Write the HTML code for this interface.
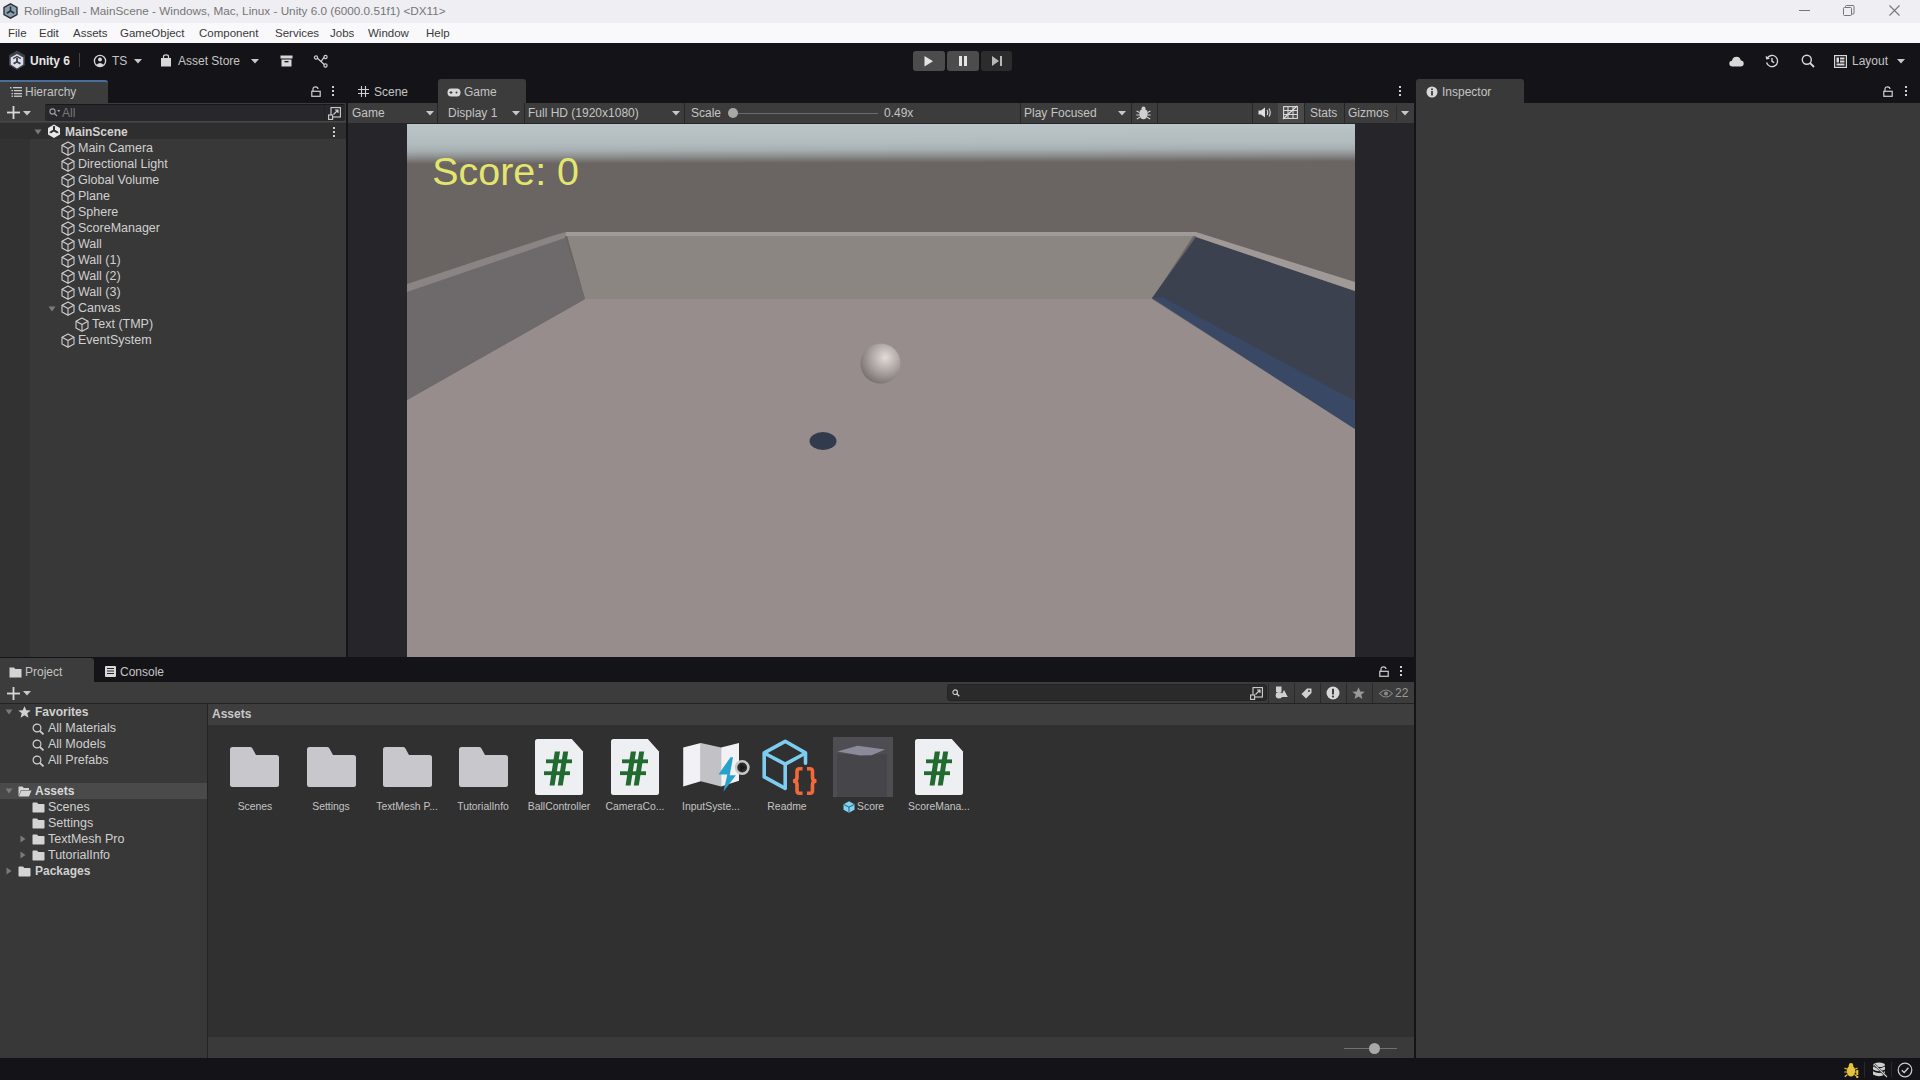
<!DOCTYPE html>
<html><head><meta charset="utf-8">
<style>
*{box-sizing:border-box;margin:0;padding:0}
html,body{width:1920px;height:1080px;overflow:hidden;background:#141418;font-family:"Liberation Sans",sans-serif;font-size:12px;color:#c4c4c4}
.a{position:absolute}
.t{position:absolute;white-space:nowrap;line-height:14px}
svg{position:absolute;overflow:visible}
.a,.t,svg{z-index:1}
.bg{z-index:0 !important}
</style></head><body>
<svg width="0" height="0" style="position:absolute">
<defs>
<symbol id="cube" viewBox="0 0 14 15"><g fill="none" stroke="#d0d0d0" stroke-width="1.1" stroke-linejoin="round"><path d="M7 1 L13 4.3 L13 11 L7 14.3 L1 11 L1 4.3 Z"/><path d="M1 4.3 L7 7.6 L13 4.3 M7 7.6 L7 14.3"/></g></symbol>
<symbol id="unity" viewBox="0 0 14 14"><path d="M7 0.5 L13 4 L13 10.5 L7 14 L1 10.5 L1 4 Z" fill="#e8e8e8"/><path d="M7 2.5 L7 6.3 L3.6 8.4 M7 6.3 L10.4 8.4" stroke="#2e2e2e" stroke-width="2" fill="none"/><path d="M5.5 2.8 L7 1.8 L8.5 2.8Z M2.6 9.4 L2.8 7.5 L4.3 8.6Z M11.4 9.4 L11.2 7.5 L9.7 8.6Z" fill="#2e2e2e"/></symbol>
</defs></svg>

<!-- Title bar -->
<div class="a bg" style="left:0;top:0;width:1920px;height:23px;background:#eeeef3"></div>
<div class="a bg" style="left:0;top:23px;width:1920px;height:20px;background:#f9f9fb"></div>
<div class="t" style="left:24px;top:4px;font-size:11.75px;color:#767676">RollingBall - MainScene - Windows, Mac, Linux - Unity 6.0 (6000.0.51f1) &lt;DX11&gt;</div>
<svg width="15" height="16" style="left:3px;top:3px" viewBox="0 0 15 16"><path d="M7.5 0.8 L14 4.4 L14 11.6 L7.5 15.2 L1 11.6 L1 4.4Z" fill="#8aa0b0" stroke="#2a3038" stroke-width="1.4"/><path d="M7.5 3.5 L7.5 8 L3.8 10.2 M7.5 8 L11.2 10.2" stroke="#2a3038" stroke-width="1.6" fill="none"/></svg>
<div class="a" style="left:1799px;top:10px;width:11px;height:1px;background:#777"></div>
<svg width="12" height="12" style="left:1843px;top:5px" viewBox="0 0 12 12"><rect x="0.5" y="2.5" width="8" height="8" rx="1" fill="none" stroke="#777" stroke-width="1"/><path d="M2.5 2.5 V1.5 Q2.5 0.5 3.5 0.5 H10 Q11 0.5 11 1.5 V8 Q11 9 10 9 H8.5" fill="none" stroke="#777" stroke-width="1"/></svg>
<svg width="12" height="12" style="left:1889px;top:5px" viewBox="0 0 12 12"><path d="M0.5 0.5 L10.5 10.5 M10.5 0.5 L0.5 10.5" stroke="#777" stroke-width="1.1"/></svg>
<div class="t" style="left:8px;top:26px;color:#3a3a3a;font-size:11.5px">File</div>
<div class="t" style="left:39px;top:26px;color:#3a3a3a;font-size:11.5px">Edit</div>
<div class="t" style="left:73px;top:26px;color:#3a3a3a;font-size:11.5px">Assets</div>
<div class="t" style="left:120px;top:26px;color:#3a3a3a;font-size:11.5px">GameObject</div>
<div class="t" style="left:199px;top:26px;color:#3a3a3a;font-size:11.5px">Component</div>
<div class="t" style="left:275px;top:26px;color:#3a3a3a;font-size:11.5px">Services</div>
<div class="t" style="left:330px;top:26px;color:#3a3a3a;font-size:11.5px">Jobs</div>
<div class="t" style="left:368px;top:26px;color:#3a3a3a;font-size:11.5px">Window</div>
<div class="t" style="left:426px;top:26px;color:#3a3a3a;font-size:11.5px">Help</div>

<!-- Main toolbar -->
<div class="a bg" style="left:0;top:43px;width:1920px;height:37px;background:#141418"></div>
<div class="t" style="left:30px;top:54px;font-weight:bold;color:#e6e6e6">Unity 6</div>
<div class="a" style="left:79px;top:53px;width:1px;height:14px;background:#444"></div>
<div class="t" style="left:112px;top:54px;color:#c4c4c4">TS</div>
<div class="t" style="left:178px;top:54px;color:#c4c4c4">Asset Store</div>
<div class="t" style="left:1852px;top:54px;color:#c4c4c4">Layout</div>
<svg width="18" height="21" style="left:8px;top:49.5px" viewBox="0 0 18 21"><path d="M9 0.5 L17 5.2 L17 15.3 L9 20 L1 15.3 L1 5.2Z" fill="#3c424e"/><path d="M9 4 L15.3 7.6 L15.3 14.6 L9 18.4 L2.7 14.6 L2.7 7.6Z" fill="#dcdee8"/><path d="M9 7.8 L9 11.8 L5.6 13.8 M9 11.8 L12.4 13.8" stroke="#3a3e4a" stroke-width="1.8" fill="none"/><path d="M5.2 8.6 L9 6.5 L12.8 8.6" stroke="#3a3e4a" stroke-width="1.2" fill="none"/></svg>
<svg width="14" height="14" style="left:93px;top:54px" viewBox="0 0 14 14"><circle cx="7" cy="7" r="5.6" fill="none" stroke="#d8d8d8" stroke-width="1.3"/><circle cx="7" cy="5.6" r="2" fill="#d8d8d8"/><path d="M3.6 10.6 Q7 7.6 10.4 10.6 L9 12 L5 12Z" fill="#d8d8d8"/></svg>
<svg width="8" height="5" style="left:134px;top:59px"><path d="M0 0 L8 0 L4 4.5Z" fill="#c8c8c8"/></svg>
<svg width="12" height="13" style="left:160px;top:54px" viewBox="0 0 12 13"><path d="M3.5 4 L3.5 2.5 Q3.5 0.8 6 0.8 Q8.5 0.8 8.5 2.5 L8.5 4" fill="none" stroke="#d8d8d8" stroke-width="1.2"/><rect x="1" y="4" width="10" height="8.5" fill="#d8d8d8"/></svg>
<svg width="8" height="5" style="left:251px;top:59px"><path d="M0 0 L8 0 L4 4.5Z" fill="#c8c8c8"/></svg>
<svg width="13" height="12" style="left:280px;top:55px" viewBox="0 0 13 12"><rect x="0.5" y="0.5" width="12" height="3" fill="#d8d8d8"/><rect x="1.5" y="4.5" width="10" height="7" fill="#d8d8d8"/><rect x="4.5" y="6" width="4" height="1.3" fill="#151515"/></svg>
<svg width="14" height="13" style="left:314px;top:55px" viewBox="0 0 14 13"><g fill="none" stroke="#d0d0d0" stroke-width="1.2"><circle cx="2" cy="2.5" r="1.6"/><circle cx="11.5" cy="2" r="1.6"/><circle cx="11.5" cy="10.5" r="1.6"/><path d="M3.5 3.3 L7 6.5 L10 2.3 M7 6.5 L10.2 9.5"/></g></svg>
<svg width="10" height="11" style="left:924px;top:56px"><path d="M0.5 0 L9 5.2 L0.5 10.4Z" fill="#e4e4e4"/></svg>
<div class="a" style="left:959px;top:56px;width:3px;height:10px;background:#e4e4e4"></div>
<div class="a" style="left:964px;top:56px;width:3px;height:10px;background:#e4e4e4"></div>
<svg width="11" height="11" style="left:992px;top:56px"><path d="M0 0 L7 5 L0 10Z" fill="#b8b8b8"/><rect x="8" y="0" width="2" height="10" fill="#b8b8b8"/></svg>
<svg width="15" height="11" style="left:1729px;top:56px" viewBox="0 0 15 11"><path d="M3.5 10.5 Q0.3 10.5 0.3 7.6 Q0.3 5 3 4.8 Q3.6 0.8 7.6 0.8 Q11.2 0.8 11.8 4.6 Q14.7 4.8 14.7 7.6 Q14.7 10.5 11.5 10.5Z" fill="#d8d8d8"/></svg>
<svg width="14" height="14" style="left:1765px;top:54px" viewBox="0 0 14 14"><path d="M2.2 4.2 A5.6 5.6 0 1 1 1.6 8.5" fill="none" stroke="#d8d8d8" stroke-width="1.3"/><path d="M0.6 1.8 L1.2 5.6 L5 4.8Z" fill="#d8d8d8"/><path d="M7 4 L7 7.3 L9.2 8.6" fill="none" stroke="#d8d8d8" stroke-width="1.4"/></svg>
<svg width="14" height="14" style="left:1801px;top:54px" viewBox="0 0 14 14"><circle cx="5.8" cy="5.8" r="4.5" fill="none" stroke="#d8d8d8" stroke-width="1.4"/><path d="M9 9 L13 13" stroke="#d8d8d8" stroke-width="1.8"/></svg>
<svg width="13" height="13" style="left:1834px;top:55px" viewBox="0 0 13 13"><rect x="0.6" y="0.6" width="11.8" height="11.8" fill="none" stroke="#d8d8d8" stroke-width="1.2"/><rect x="2.5" y="2.5" width="2.5" height="5" fill="#d8d8d8"/><rect x="6" y="2.5" width="4.5" height="2" fill="#d8d8d8"/><rect x="6" y="5.5" width="4.5" height="2" fill="#d8d8d8"/><rect x="2.5" y="8.5" width="8" height="2" fill="#d8d8d8"/></svg>
<svg width="8" height="5" style="left:1897px;top:59px"><path d="M0 0 L8 0 L4 4.5Z" fill="#c8c8c8"/></svg>


<!-- play buttons -->
<div class="a bg" style="left:913px;top:51px;width:32px;height:20px;background:#4c4c4c;border-radius:3px"></div>
<div class="a bg" style="left:947px;top:51px;width:32px;height:20px;background:#4c4c4c;border-radius:3px"></div>
<div class="a bg" style="left:981px;top:51px;width:31px;height:20px;background:#2c2c2c;border-radius:3px"></div>

<!-- Hierarchy panel -->
<div class="a bg" style="left:0;top:80px;width:108px;height:23px;background:#3c3c3c;border-top:2px solid #4a6e9a;border-top-right-radius:3px"></div>
<div class="t" style="left:25px;top:85px">Hierarchy</div>
<div class="a bg" style="left:0;top:103px;width:346px;height:20px;background:#3c3c3c"></div>
<div class="a bg" style="left:45px;top:104px;width:300px;height:17px;background:#28282c;border-top:1px solid #18181a;border-radius:2px"></div>
<div class="a bg" style="left:0;top:121px;width:346px;height:1px;background:#48484c"></div>
<div class="t" style="left:62px;top:106px;color:#777">All</div>
<svg width="12" height="10" style="left:10px;top:87px" viewBox="0 0 12 10"><g fill="#c8c8c8"><rect x="0" y="0" width="1.5" height="1.5"/><rect x="3" y="0" width="9" height="1.3"/><rect x="1.5" y="3" width="1.5" height="1.3"/><rect x="4" y="3" width="8" height="1.3"/><rect x="1.5" y="6" width="1.5" height="1.3"/><rect x="4" y="6" width="8" height="1.3"/><rect x="1.5" y="8.6" width="1.5" height="1.3"/><rect x="4" y="8.6" width="8" height="1.3"/></g></svg>
<svg width="10" height="11" style="left:311px;top:86px" viewBox="0 0 10 11"><path d="M2 5 L2 3 Q2 0.8 4.5 0.8 Q7 0.8 7 3" fill="none" stroke="#d0d0d0" stroke-width="1.2"/><rect x="0.8" y="5.3" width="8.4" height="5" fill="none" stroke="#d0d0d0" stroke-width="1.2"/></svg>
<div class="a" style="left:332px;top:86px;width:2px;height:2px;background:#d0d0d0"></div>
<div class="a" style="left:332px;top:90px;width:2px;height:2px;background:#d0d0d0"></div>
<div class="a" style="left:332px;top:94px;width:2px;height:2px;background:#d0d0d0"></div>
<svg width="13" height="13" style="left:7px;top:106px" viewBox="0 0 13 13"><rect x="5.6" y="0" width="1.8" height="13" fill="#d8d8d8"/><rect x="0" y="5.6" width="13" height="1.8" fill="#d8d8d8"/></svg>
<svg width="8" height="5" style="left:23px;top:111px"><path d="M0 0 L8 0 L4 4.5Z" fill="#c8c8c8"/></svg>
<div class="a" style="left:324px;top:105px;width:1px;height:16px;background:#222"></div>
<svg width="13" height="13" style="left:328px;top:107px" viewBox="0 0 13 13"><g fill="none" stroke="#d0d0d0" stroke-width="1.1"><rect x="3" y="0.6" width="9.4" height="9.4"/><rect x="0.6" y="8" width="4" height="4.4" fill="#2a2a2a"/><path d="M5.5 7.5 L10 3 M7 3 L10 3 L10 6"/></g></svg>
<svg width="12" height="10" style="left:49px;top:108px" viewBox="0 0 12 10"><circle cx="3.5" cy="3.5" r="2.6" fill="none" stroke="#a0a0a0" stroke-width="1.1"/><path d="M5.5 5.5 L8 8" stroke="#a0a0a0" stroke-width="1.3"/><path d="M8 2 L11.5 2 L9.75 4Z" fill="#a0a0a0"/></svg>
<!-- scene/game tab icons -->
<svg width="11" height="11" style="left:358px;top:86px" viewBox="0 0 11 11"><g stroke="#d0d0d0" stroke-width="1.1"><path d="M3.5 0 V11 M7.5 0 V11 M0 3.5 H11 M0 7.5 H11"/></g></svg>
<svg width="14" height="9" style="left:447px;top:88px" viewBox="0 0 14 9"><path d="M4 0.5 H10 Q13.5 0.5 13.5 4.5 Q13.5 8.5 10 8.5 H4 Q0.5 8.5 0.5 4.5 Q0.5 0.5 4 0.5Z" fill="#d8d8d8"/><path d="M2.5 4.5 H5.5 M4 3 V6" stroke="#3c3c3c" stroke-width="1.1"/><circle cx="9.5" cy="4.5" r="1" fill="#3c3c3c"/></svg>
<div class="a" style="left:1399px;top:86px;width:2px;height:2px;background:#d0d0d0"></div>
<div class="a" style="left:1399px;top:90px;width:2px;height:2px;background:#d0d0d0"></div>
<div class="a" style="left:1399px;top:94px;width:2px;height:2px;background:#d0d0d0"></div>
<!-- game toolbar -->
<div class="t" style="left:352px;top:106px">Game</div>
<svg width="8" height="5" style="left:426px;top:111px"><path d="M0 0 L8 0 L4 4.5Z" fill="#c8c8c8"/></svg>
<div class="a" style="left:437px;top:103px;width:1px;height:20px;background:#262626"></div>
<div class="t" style="left:448px;top:106px">Display 1</div>
<svg width="8" height="5" style="left:512px;top:111px"><path d="M0 0 L8 0 L4 4.5Z" fill="#c8c8c8"/></svg>
<div class="a" style="left:524px;top:103px;width:1px;height:20px;background:#262626"></div>
<div class="t" style="left:528px;top:106px">Full HD (1920x1080)</div>
<svg width="8" height="5" style="left:672px;top:111px"><path d="M0 0 L8 0 L4 4.5Z" fill="#c8c8c8"/></svg>
<div class="a" style="left:684px;top:103px;width:1px;height:20px;background:#262626"></div>
<div class="t" style="left:691px;top:106px">Scale</div>
<div class="a" style="left:733px;top:113px;width:145px;height:1px;background:#6a6a6a"></div>
<div class="a" style="left:728px;top:108px;width:10px;height:10px;border-radius:50%;background:#a8a8a8"></div>
<div class="t" style="left:884px;top:106px">0.49x</div>
<div class="a" style="left:1020px;top:103px;width:1px;height:20px;background:#262626"></div>
<div class="t" style="left:1024px;top:106px">Play Focused</div>
<svg width="8" height="5" style="left:1118px;top:111px"><path d="M0 0 L8 0 L4 4.5Z" fill="#c8c8c8"/></svg>
<div class="a" style="left:1131px;top:103px;width:1px;height:20px;background:#262626"></div>
<svg width="15" height="14" style="left:1136px;top:106px" viewBox="0 0 15 14"><g fill="#d0d0d0"><ellipse cx="7.5" cy="8" rx="4.3" ry="5.3"/><circle cx="7.5" cy="2.6" r="2"/></g><g stroke="#d0d0d0" stroke-width="1.1"><path d="M0.5 5 L3.5 6.5 M14.5 5 L11.5 6.5 M0.3 9 H3.3 M14.7 9 H11.7 M0.8 13 L3.8 11.3 M14.2 13 L11.2 11.3"/></g></svg>
<div class="a" style="left:1157px;top:103px;width:1px;height:20px;background:#262626"></div>
<div class="a" style="left:1252px;top:103px;width:1px;height:20px;background:#262626"></div>
<svg width="14" height="11" style="left:1258px;top:107px" viewBox="0 0 14 11"><path d="M0.5 3.5 H3 L7 0.5 V10.5 L3 7.5 H0.5Z" fill="#e0e0e0"/><path d="M9 3 Q10.5 5.5 9 8 M11 1.5 Q13.5 5.5 11 9.5" fill="none" stroke="#e0e0e0" stroke-width="1.1"/></svg>
<div class="a" style="left:1278px;top:103px;width:26px;height:20px;background:#4a4a4a"></div>
<svg width="15" height="13" style="left:1283px;top:106px" viewBox="0 0 15 13"><g fill="none" stroke="#d8d8d8" stroke-width="1.1"><rect x="0.6" y="0.6" width="13.8" height="11.8"/><path d="M0.6 4.5 H14.4 M0.6 8.5 H14.4 M5 0.6 V12.4 M10 0.6 V12.4"/><path d="M0 13 L14 0" stroke-width="1.4"/></g></svg>
<div class="a" style="left:1304px;top:103px;width:1px;height:20px;background:#262626"></div>
<div class="t" style="left:1310px;top:106px">Stats</div>
<div class="a" style="left:1344px;top:103px;width:1px;height:20px;background:#262626"></div>
<div class="t" style="left:1348px;top:106px">Gizmos</div>
<div class="a" style="left:1396px;top:105px;width:1px;height:16px;background:#2e2e2e"></div>
<svg width="8" height="5" style="left:1401px;top:111px"><path d="M0 0 L8 0 L4 4.5Z" fill="#c8c8c8"/></svg>
<!-- inspector tab -->
<svg width="12" height="12" style="left:1426px;top:86px" viewBox="0 0 12 12"><circle cx="6" cy="6" r="5.5" fill="#d8d8d8"/><rect x="5.1" y="5" width="1.8" height="4.5" fill="#3c3c3c"/><rect x="5.1" y="2.5" width="1.8" height="1.6" fill="#3c3c3c"/></svg>
<svg width="10" height="11" style="left:1883px;top:86px" viewBox="0 0 10 11"><path d="M2 5 L2 3 Q2 0.8 4.5 0.8 Q7 0.8 7 3" fill="none" stroke="#d0d0d0" stroke-width="1.2"/><rect x="0.8" y="5.3" width="8.4" height="5" fill="none" stroke="#d0d0d0" stroke-width="1.2"/></svg>
<div class="a" style="left:1905px;top:86px;width:2px;height:2px;background:#d0d0d0"></div>
<div class="a" style="left:1905px;top:90px;width:2px;height:2px;background:#d0d0d0"></div>
<div class="a" style="left:1905px;top:94px;width:2px;height:2px;background:#d0d0d0"></div>

<div class="a bg" style="left:0;top:123px;width:346px;height:534px;background:#383838"></div>
<div class="a bg" style="left:0;top:123px;width:346px;height:16px;background:#2e2e2e"></div>
<div class="a bg" style="left:0;top:139px;width:30px;height:518px;background:#323232"></div>
<div class="t" style="left:65px;top:124px;line-height:16px;font-weight:bold;color:#d2d2d2">MainScene</div>
<svg width="8" height="8" style="left:34px;top:128px"><path d="M0.5 1.5 L7.5 1.5 L4 6.5Z" fill="#7a7a7a"/></svg>
<svg width="14" height="14" style="left:47px;top:124px" viewBox="0 0 14 14"><use href="#unity"/></svg>
<div class="a" style="left:333px;top:127px;width:2px;height:2px;background:#ccc"></div>
<div class="a" style="left:333px;top:131px;width:2px;height:2px;background:#ccc"></div>
<div class="a" style="left:333px;top:135px;width:2px;height:2px;background:#ccc"></div>
<svg width="14" height="15" style="left:61px;top:141px"><use href="#cube"/></svg>
<div class="t" style="left:78px;top:140px;line-height:16px;color:#d0d0d0;font-size:12.5px">Main Camera</div>
<svg width="14" height="15" style="left:61px;top:157px"><use href="#cube"/></svg>
<div class="t" style="left:78px;top:156px;line-height:16px;color:#d0d0d0;font-size:12.5px">Directional Light</div>
<svg width="14" height="15" style="left:61px;top:173px"><use href="#cube"/></svg>
<div class="t" style="left:78px;top:172px;line-height:16px;color:#d0d0d0;font-size:12.5px">Global Volume</div>
<svg width="14" height="15" style="left:61px;top:189px"><use href="#cube"/></svg>
<div class="t" style="left:78px;top:188px;line-height:16px;color:#d0d0d0;font-size:12.5px">Plane</div>
<svg width="14" height="15" style="left:61px;top:205px"><use href="#cube"/></svg>
<div class="t" style="left:78px;top:204px;line-height:16px;color:#d0d0d0;font-size:12.5px">Sphere</div>
<svg width="14" height="15" style="left:61px;top:221px"><use href="#cube"/></svg>
<div class="t" style="left:78px;top:220px;line-height:16px;color:#d0d0d0;font-size:12.5px">ScoreManager</div>
<svg width="14" height="15" style="left:61px;top:237px"><use href="#cube"/></svg>
<div class="t" style="left:78px;top:236px;line-height:16px;color:#d0d0d0;font-size:12.5px">Wall</div>
<svg width="14" height="15" style="left:61px;top:253px"><use href="#cube"/></svg>
<div class="t" style="left:78px;top:252px;line-height:16px;color:#d0d0d0;font-size:12.5px">Wall (1)</div>
<svg width="14" height="15" style="left:61px;top:269px"><use href="#cube"/></svg>
<div class="t" style="left:78px;top:268px;line-height:16px;color:#d0d0d0;font-size:12.5px">Wall (2)</div>
<svg width="14" height="15" style="left:61px;top:285px"><use href="#cube"/></svg>
<div class="t" style="left:78px;top:284px;line-height:16px;color:#d0d0d0;font-size:12.5px">Wall (3)</div>
<svg width="14" height="15" style="left:61px;top:301px"><use href="#cube"/></svg>
<div class="t" style="left:78px;top:300px;line-height:16px;color:#d0d0d0;font-size:12.5px">Canvas</div>
<svg width="14" height="15" style="left:75px;top:317px"><use href="#cube"/></svg>
<div class="t" style="left:92px;top:316px;line-height:16px;color:#d0d0d0;font-size:12.5px">Text (TMP)</div>
<svg width="14" height="15" style="left:61px;top:333px"><use href="#cube"/></svg>
<div class="t" style="left:78px;top:332px;line-height:16px;color:#d0d0d0;font-size:12.5px">EventSystem</div>
<svg width="8" height="8" style="left:48px;top:305px"><path d="M0.5 1.5 L7.5 1.5 L4 6.5Z" fill="#7a7a7a"/></svg>

<!-- Scene/Game panel -->
<div class="a bg" style="left:346px;top:80px;width:2px;height:577px;background:#141418"></div>
<div class="a bg" style="left:438px;top:79px;width:88px;height:24px;background:#3c3c3c;border-radius:3px 3px 0 0"></div>
<div class="t" style="left:374px;top:85px">Scene</div>
<div class="t" style="left:464px;top:85px">Game</div>
<div class="a bg" style="left:348px;top:103px;width:1066px;height:20px;background:#3c3c3c"></div>
<div class="a bg" style="left:348px;top:123px;width:1066px;height:534px;background:#25252a"></div>

<!-- Game render -->
<div class="a bg" style="left:407px;top:124px;width:948px;height:533px;background:#6a6462;overflow:hidden">
<svg width="948" height="533" viewBox="0 0 948 533" style="left:0;top:0">
<defs><linearGradient id="sky" gradientUnits="userSpaceOnUse" x1="0" y1="0" x2="0" y2="40">
<stop offset="0" stop-color="#bcc6c8"/><stop offset="0.5" stop-color="#b2bcbe"/><stop offset="0.68" stop-color="#a6aeb0"/><stop offset="0.84" stop-color="#8a8c8c"/><stop offset="1" stop-color="#6a6462"/></linearGradient>
<radialGradient id="ball" cx="0.62" cy="0.35" r="0.75"><stop offset="0" stop-color="#e2dcd8"/><stop offset="0.5" stop-color="#aaa3a1"/><stop offset="1" stop-color="#6d6767"/></radialGradient></defs>
<rect x="0" y="0" width="948" height="60" fill="url(#sky)" transform="skewY(-0.15)"/>
<polygon points="0,276 178,175 745,175 948,305 948,533 0,533" fill="#968d8c"/>
<polygon points="159,108 789,108 745,175 178,175" fill="#8c8682"/>
<polygon points="159,108 789,108 789,112 158,112" fill="#a09a98"/>
<polygon points="0,168 158,114 178,175 0,276" fill="#6e6a6c"/>
<polygon points="0,160 148,111 159,108 158,114 0,168" fill="#8a8484"/>
<polygon points="789,113 948,167 948,277 745,174" fill="#3c4150"/>
<polygon points="789,108 948,158 948,167 789,113" fill="#9f9997"/>
<polygon points="745,174 755,173 948,277 948,305" fill="#384865"/>
<ellipse cx="416" cy="317" rx="13.5" ry="9" fill="#323b4c"/>
<circle cx="473.5" cy="239.5" r="20" fill="url(#ball)"/>
<text x="25.3" y="60.7" font-family="Liberation Sans" font-size="39.4" fill="#e3e66e">Score: 0</text>
</svg>
</div>

<!-- Inspector -->
<div class="a bg" style="left:1414px;top:80px;width:2px;height:978px;background:#141418"></div>
<div class="a bg" style="left:1416px;top:79px;width:108px;height:24px;background:#393939;border-radius:3px 3px 0 0"></div>
<div class="t" style="left:1442px;top:85px">Inspector</div>
<div class="a bg" style="left:1416px;top:103px;width:504px;height:955px;background:#393939"></div>

<!-- Project panel -->
<div class="a bg" style="left:0;top:658px;width:94px;height:25px;background:#3c3c3c;border-radius:0 3px 0 0"></div>
<div class="t" style="left:25px;top:665px">Project</div>
<div class="t" style="left:120px;top:665px">Console</div>
<div class="a bg" style="left:0;top:682px;width:1414px;height:21px;background:#3c3c3c"></div>
<div class="a bg" style="left:0;top:703px;width:1414px;height:1px;background:#232323"></div>
<div class="a bg" style="left:0;top:704px;width:207px;height:354px;background:#383838"></div>
<div class="a bg" style="left:207px;top:704px;width:1px;height:354px;background:#232323"></div>
<div class="a bg" style="left:208px;top:704px;width:1206px;height:354px;background:#303030"></div>

<svg width="13" height="11" style="left:9px;top:667px" viewBox="0 0 13 11"><path d="M0.5 0.5 H5 L6.3 2 H12.5 V10.5 H0.5Z" fill="#d4d4d4"/></svg>
<svg width="11" height="11" style="left:105px;top:666px" viewBox="0 0 11 11"><rect x="0" y="0" width="11" height="11" rx="1" fill="#d8d8d8"/><rect x="2" y="2" width="7" height="1" fill="#222"/><rect x="2" y="4.5" width="7" height="1" fill="#222"/><rect x="2" y="7" width="7" height="1" fill="#222"/></svg>
<svg width="10" height="11" style="left:1379px;top:666px" viewBox="0 0 10 11"><path d="M2 5 L2 3 Q2 0.8 4.5 0.8 Q7 0.8 7 3" fill="none" stroke="#d0d0d0" stroke-width="1.2"/><rect x="0.8" y="5.3" width="8.4" height="5" fill="none" stroke="#d0d0d0" stroke-width="1.2"/></svg>
<div class="a" style="left:1400px;top:666px;width:2px;height:2px;background:#d0d0d0"></div>
<div class="a" style="left:1400px;top:670px;width:2px;height:2px;background:#d0d0d0"></div>
<div class="a" style="left:1400px;top:674px;width:2px;height:2px;background:#d0d0d0"></div>
<svg width="13" height="13" style="left:7px;top:687px" viewBox="0 0 13 13"><rect x="5.6" y="0" width="1.8" height="13" fill="#d8d8d8"/><rect x="0" y="5.6" width="13" height="1.8" fill="#d8d8d8"/></svg>
<svg width="8" height="5" style="left:23px;top:691px"><path d="M0 0 L8 0 L4 4.5Z" fill="#c8c8c8"/></svg>
<div class="a" style="left:947px;top:684px;width:320px;height:17px;background:#2a2a2a;border-radius:3px;border:1px solid #232323"></div>
<svg width="8" height="8" style="left:952px;top:689px" viewBox="0 0 8 8"><circle cx="3.2" cy="3.2" r="2.3" fill="none" stroke="#c8c8c8" stroke-width="1.2"/><path d="M4.8 4.8 L7.3 7.3" stroke="#c8c8c8" stroke-width="1.5"/></svg>
<svg width="13" height="13" style="left:1250px;top:687px" viewBox="0 0 13 13"><g fill="none" stroke="#d0d0d0" stroke-width="1.1"><rect x="3" y="0.6" width="9.4" height="9.4"/><rect x="0.6" y="8" width="4" height="4.4" fill="#2a2a2a"/><path d="M5.5 7.5 L10 3 M7 3 L10 3 L10 6"/></g></svg>
<div class="a" style="left:1268px;top:683px;width:1px;height:20px;background:#2a2a2a"></div>
<div class="a" style="left:1294px;top:683px;width:1px;height:20px;background:#2a2a2a"></div>
<div class="a" style="left:1320px;top:683px;width:1px;height:20px;background:#2a2a2a"></div>
<div class="a" style="left:1346px;top:683px;width:1px;height:20px;background:#2a2a2a"></div>
<div class="a" style="left:1372px;top:683px;width:1px;height:20px;background:#2a2a2a"></div>
<svg width="13" height="13" style="left:1275px;top:686px" viewBox="0 0 13 13"><rect x="1" y="0.5" width="5.5" height="5.5" fill="#d0d0d0"/><path d="M9 4 L12.8 11 H5.2Z" fill="#d0d0d0"/><circle cx="4" cy="9.3" r="3.3" fill="#d0d0d0"/></svg>
<svg width="11" height="11" style="left:1301px;top:688px" viewBox="0 0 11 11"><path d="M6 0.5 H10.5 V5 L5 10.5 L0.5 6Z" fill="#d0d0d0"/><circle cx="8" cy="3" r="1" fill="#3c3c3c"/></svg>
<svg width="14" height="14" style="left:1326px;top:686px" viewBox="0 0 14 14"><circle cx="7" cy="7" r="6.5" fill="#d8d8d8"/><rect x="6" y="2.8" width="2" height="5.6" fill="#3c3c3c"/><rect x="6" y="9.6" width="2" height="1.8" fill="#3c3c3c"/></svg>
<svg width="13" height="13" style="left:1352px;top:687px" viewBox="0 0 13 13"><path d="M6.5 0.3 L8.3 4.4 L12.7 4.7 L9.3 7.6 L10.4 12 L6.5 9.6 L2.6 12 L3.7 7.6 L0.3 4.7 L4.7 4.4Z" fill="#9a9a9a"/></svg>
<svg width="14" height="9" style="left:1379px;top:689px" viewBox="0 0 14 9"><path d="M0.5 4.5 Q7 -2.5 13.5 4.5 Q7 11.5 0.5 4.5Z" fill="none" stroke="#8a8a8a" stroke-width="1.1"/><circle cx="7" cy="4.5" r="2" fill="#8a8a8a"/></svg>
<div class="t" style="left:1395px;top:686px;color:#9a9a9a">22</div>
<svg width="8" height="6" style="left:5px;top:709px"><path d="M0.5 0.5 L7.5 0.5 L4 5.5Z" fill="#7a7a7a"/></svg>
<svg width="13" height="12" style="left:18px;top:706px" viewBox="0 0 13 12"><path d="M6.5 0.3 L8.3 4.2 L12.7 4.5 L9.3 7.3 L10.4 11.7 L6.5 9.3 L2.6 11.7 L3.7 7.3 L0.3 4.5 L4.7 4.2Z" fill="#d0d0d0"/></svg>
<div class="t" style="left:35px;top:704px;line-height:16px;font-weight:bold;color:#d0d0d0">Favorites</div>
<svg width="13" height="12" style="left:32px;top:723px" viewBox="0 0 13 12"><circle cx="5" cy="5" r="3.9" fill="none" stroke="#d0d0d0" stroke-width="1.2"/><path d="M7.8 7.8 L11.5 11.3" stroke="#d0d0d0" stroke-width="1.8"/></svg>
<div class="t" style="left:48px;top:720px;line-height:16px;color:#d0d0d0;font-size:12.5px">All Materials</div>
<svg width="13" height="12" style="left:32px;top:739px" viewBox="0 0 13 12"><circle cx="5" cy="5" r="3.9" fill="none" stroke="#d0d0d0" stroke-width="1.2"/><path d="M7.8 7.8 L11.5 11.3" stroke="#d0d0d0" stroke-width="1.8"/></svg>
<div class="t" style="left:48px;top:736px;line-height:16px;color:#d0d0d0;font-size:12.5px">All Models</div>
<svg width="13" height="12" style="left:32px;top:755px" viewBox="0 0 13 12"><circle cx="5" cy="5" r="3.9" fill="none" stroke="#d0d0d0" stroke-width="1.2"/><path d="M7.8 7.8 L11.5 11.3" stroke="#d0d0d0" stroke-width="1.8"/></svg>
<div class="t" style="left:48px;top:752px;line-height:16px;color:#d0d0d0;font-size:12.5px">All Prefabs</div>
<div class="a" style="left:0;top:783px;width:207px;height:16px;background:#4a4a4a"></div>
<svg width="8" height="6" style="left:5px;top:788px"><path d="M0.5 0.5 L7.5 0.5 L4 5.5Z" fill="#7a7a7a"/></svg>
<svg width="14" height="11" style="left:18px;top:786px" viewBox="0 0 14 11"><path d="M0.5 10.5 V1 Q0.5 0.5 1 0.5 H4.5 L5.8 2 H11 V4 H3 L0.5 10.5Z" fill="#d4d4d4"/><path d="M3.3 4.5 H13.5 L11 10.5 H0.8Z" fill="#d4d4d4"/></svg>
<div class="t" style="left:35px;top:783px;line-height:16px;font-weight:bold;color:#d8d8d8">Assets</div>
<svg width="13" height="11" style="left:32px;top:802px" viewBox="0 0 13 11"><path d="M0.5 1.2 Q0.5 0.5 1.2 0.5 H5 L6.3 2 H11.8 Q12.5 2 12.5 2.7 V9.8 Q12.5 10.5 11.8 10.5 H1.2 Q0.5 10.5 0.5 9.8Z" fill="#d4d4d4"/></svg>
<div class="t" style="left:48px;top:799px;line-height:16px;color:#d0d0d0;font-size:12.5px">Scenes</div>
<svg width="13" height="11" style="left:32px;top:818px" viewBox="0 0 13 11"><path d="M0.5 1.2 Q0.5 0.5 1.2 0.5 H5 L6.3 2 H11.8 Q12.5 2 12.5 2.7 V9.8 Q12.5 10.5 11.8 10.5 H1.2 Q0.5 10.5 0.5 9.8Z" fill="#d4d4d4"/></svg>
<div class="t" style="left:48px;top:815px;line-height:16px;color:#d0d0d0;font-size:12.5px">Settings</div>
<svg width="6" height="8" style="left:20px;top:835px"><path d="M0.5 0.5 L5.5 4 L0.5 7.5Z" fill="#7a7a7a"/></svg>
<svg width="13" height="11" style="left:32px;top:834px" viewBox="0 0 13 11"><path d="M0.5 1.2 Q0.5 0.5 1.2 0.5 H5 L6.3 2 H11.8 Q12.5 2 12.5 2.7 V9.8 Q12.5 10.5 11.8 10.5 H1.2 Q0.5 10.5 0.5 9.8Z" fill="#d4d4d4"/></svg>
<div class="t" style="left:48px;top:831px;line-height:16px;color:#d0d0d0;font-size:12.5px">TextMesh Pro</div>
<svg width="6" height="8" style="left:20px;top:851px"><path d="M0.5 0.5 L5.5 4 L0.5 7.5Z" fill="#7a7a7a"/></svg>
<svg width="13" height="11" style="left:32px;top:850px" viewBox="0 0 13 11"><path d="M0.5 1.2 Q0.5 0.5 1.2 0.5 H5 L6.3 2 H11.8 Q12.5 2 12.5 2.7 V9.8 Q12.5 10.5 11.8 10.5 H1.2 Q0.5 10.5 0.5 9.8Z" fill="#d4d4d4"/></svg>
<div class="t" style="left:48px;top:847px;line-height:16px;color:#d0d0d0;font-size:12.5px">TutorialInfo</div>
<svg width="6" height="8" style="left:6px;top:867px"><path d="M0.5 0.5 L5.5 4 L0.5 7.5Z" fill="#7a7a7a"/></svg>
<svg width="13" height="11" style="left:18px;top:866px" viewBox="0 0 13 11"><path d="M0.5 1.2 Q0.5 0.5 1.2 0.5 H5 L6.3 2 H11.8 Q12.5 2 12.5 2.7 V9.8 Q12.5 10.5 11.8 10.5 H1.2 Q0.5 10.5 0.5 9.8Z" fill="#d4d4d4"/></svg>
<div class="t" style="left:35px;top:863px;line-height:16px;font-weight:bold;color:#d0d0d0">Packages</div>
<div class="a" style="left:208px;top:704px;width:1206px;height:21px;background:#3e3e3e"></div>
<div class="t" style="left:212px;top:707px;font-weight:bold;color:#c8c8c8">Assets</div>
<div class="a" style="left:208px;top:1037px;width:1206px;height:21px;background:#3a3a3a"></div>
<div class="a" style="left:1344px;top:1048px;width:53px;height:1px;background:#707070"></div>
<div class="a" style="left:1369px;top:1043px;width:11px;height:11px;border-radius:50%;background:#a8a8a8"></div>
<svg width="49" height="40" style="left:230px;top:747px" viewBox="0 0 49 40"><path d="M0 2.5 Q0 0 2.5 0 H20 Q21.5 0 22.3 1.3 L26 8 H46.5 Q49 8 49 10.5 V37.5 Q49 40 46.5 40 H2.5 Q0 40 0 37.5Z" fill="#c8c8cc"/></svg>
<div class="t" style="left:195px;top:800px;width:120px;text-align:center;font-size:10.4px;color:#c4c4c4">Scenes</div>
<svg width="49" height="40" style="left:307px;top:747px" viewBox="0 0 49 40"><path d="M0 2.5 Q0 0 2.5 0 H20 Q21.5 0 22.3 1.3 L26 8 H46.5 Q49 8 49 10.5 V37.5 Q49 40 46.5 40 H2.5 Q0 40 0 37.5Z" fill="#c8c8cc"/></svg>
<div class="t" style="left:271px;top:800px;width:120px;text-align:center;font-size:10.4px;color:#c4c4c4">Settings</div>
<svg width="49" height="40" style="left:383px;top:747px" viewBox="0 0 49 40"><path d="M0 2.5 Q0 0 2.5 0 H20 Q21.5 0 22.3 1.3 L26 8 H46.5 Q49 8 49 10.5 V37.5 Q49 40 46.5 40 H2.5 Q0 40 0 37.5Z" fill="#c8c8cc"/></svg>
<div class="t" style="left:347px;top:800px;width:120px;text-align:center;font-size:10.4px;color:#c4c4c4">TextMesh P...</div>
<svg width="49" height="40" style="left:459px;top:747px" viewBox="0 0 49 40"><path d="M0 2.5 Q0 0 2.5 0 H20 Q21.5 0 22.3 1.3 L26 8 H46.5 Q49 8 49 10.5 V37.5 Q49 40 46.5 40 H2.5 Q0 40 0 37.5Z" fill="#c8c8cc"/></svg>
<div class="t" style="left:423px;top:800px;width:120px;text-align:center;font-size:10.4px;color:#c4c4c4">TutorialInfo</div>
<svg width="48" height="56" style="left:535px;top:739px" viewBox="0 0 48 56"><path d="M0 2.5 Q0 0 2.5 0 H36.8 L48 12.4 V53.5 Q48 56 45.5 56 H2.5 Q0 56 0 53.5Z" fill="#eeeff3"/><g fill="#216a30"><rect x="11" y="20.4" width="26" height="3.8"/><rect x="9" y="32.3" width="26" height="3.8"/><path d="M19.8 12.4 H25 L19.6 46.5 H14.6Z"/><path d="M28.2 12.4 H33.2 L27.8 46.5 H22.8Z"/></g></svg>
<div class="t" style="left:499px;top:800px;width:120px;text-align:center;font-size:10.4px;color:#c4c4c4">BallController</div>
<svg width="48" height="56" style="left:611px;top:739px" viewBox="0 0 48 56"><path d="M0 2.5 Q0 0 2.5 0 H36.8 L48 12.4 V53.5 Q48 56 45.5 56 H2.5 Q0 56 0 53.5Z" fill="#eeeff3"/><g fill="#216a30"><rect x="11" y="20.4" width="26" height="3.8"/><rect x="9" y="32.3" width="26" height="3.8"/><path d="M19.8 12.4 H25 L19.6 46.5 H14.6Z"/><path d="M28.2 12.4 H33.2 L27.8 46.5 H22.8Z"/></g></svg>
<div class="t" style="left:575px;top:800px;width:120px;text-align:center;font-size:10.4px;color:#c4c4c4">CameraCo...</div>
<svg width="48" height="56" style="left:915px;top:739px" viewBox="0 0 48 56"><path d="M0 2.5 Q0 0 2.5 0 H36.8 L48 12.4 V53.5 Q48 56 45.5 56 H2.5 Q0 56 0 53.5Z" fill="#eeeff3"/><g fill="#216a30"><rect x="11" y="20.4" width="26" height="3.8"/><rect x="9" y="32.3" width="26" height="3.8"/><path d="M19.8 12.4 H25 L19.6 46.5 H14.6Z"/><path d="M28.2 12.4 H33.2 L27.8 46.5 H22.8Z"/></g></svg>
<div class="t" style="left:879px;top:800px;width:120px;text-align:center;font-size:10.4px;color:#c4c4c4">ScoreMana...</div>
<svg width="70" height="52" style="left:682px;top:741px" viewBox="682 741 70 52">
<path d="M683.2 747.6 L700.8 742.9 L700.8 781.2 L683.2 786.6Z" fill="#f2f2f6"/>
<path d="M700.8 742.9 L721.1 747.6 L721.1 786.6 L700.8 781.2Z" fill="#c2c2c6"/>
<path d="M721.1 747.6 L739 742.9 L739 780.8 L721.1 786.6Z" fill="#f2f2f6"/>
<path d="M730.5 757.3 L718.4 774.5 L727.3 774.5 L723.4 791.7 L735.9 775.3 L729.7 775.3 L733 757.3Z" fill="#26a2cc"/>
<circle cx="742.2" cy="767.5" r="6.2" fill="#2b2b2b" stroke="#c8c8c8" stroke-width="2.6"/>
<path d="M740.3 763.8 L746 767.5 L740.3 771.2Z" fill="#1a1a1a"/>
</svg>
<div class="t" style="left:651px;top:800px;width:120px;text-align:center;font-size:10.4px;color:#c4c4c4">InputSyste...</div>
<svg width="60" height="58" style="left:760px;top:738px" viewBox="760 738 60 58">
<g fill="none" stroke="#7ccdf0" stroke-width="3.6" stroke-linejoin="round" stroke-linecap="round">
<path d="M805.5 763.3 L805.5 752.9 L785.2 741.3 L764.2 752.9 L764.2 776.9 L785.2 788.4"/>
<path d="M766 754 L785.2 764.2 L804 754 M785.2 764.2 L785.2 787"/>
</g>
<g fill="none" stroke="#f06a3a" stroke-width="3.6" stroke-linejoin="miter">
<path d="M802.5 768.8 H799.5 Q797 768.8 797 771.5 V777.5 Q797 781 793 781 Q797 781 797 784.5 V790.5 Q797 793.2 799.5 793.2 H802.5"/>
<path d="M807 768.8 H810 Q812.5 768.8 812.5 771.5 V777.5 Q812.5 781 816.5 781 Q812.5 781 812.5 784.5 V790.5 Q812.5 793.2 810 793.2 H807"/>
</g></svg>
<div class="t" style="left:727px;top:800px;width:120px;text-align:center;font-size:10.4px;color:#c4c4c4">Readme</div>
<svg width="60" height="60" style="left:833px;top:737px" viewBox="833 737 60 60">
<rect x="833" y="737" width="60" height="60" fill="#4e4e52"/>
<rect x="837" y="754" width="50" height="43" fill="#45454a"/>
<path d="M837.5 751.5 L857.5 745.8 L885 749.6 L871.7 755.2 L860 755.4Z" fill="#8a8a9a"/>
</svg>
<svg width="12" height="12" style="left:843px;top:801px" viewBox="0 0 12 12"><path d="M6 0.3 L11.5 3.2 L11.5 8.8 L6 11.7 L0.5 8.8 L0.5 3.2Z" fill="#7fd2f2"/><path d="M0.8 3.4 L6 6.2 L11.2 3.4 M6 6.2 V11.5" stroke="#2d5a70" stroke-width="1" fill="none"/></svg>
<div class="t" style="left:857px;top:800px;font-size:10.4px;color:#c4c4c4">Score</div>
<!-- Status bar -->
<div class="a bg" style="left:0;top:1058px;width:1920px;height:22px;background:#141418"></div>
<svg width="16" height="16" style="left:1844px;top:1062px" viewBox="0 0 16 16"><g fill="#e8c040"><ellipse cx="7" cy="9" rx="4.2" ry="5.5"/><circle cx="7" cy="3.3" r="2.2"/></g><g stroke="#e8c040" stroke-width="1.2"><path d="M0.5 6 L3 7.3 M13.5 6 L11 7.3 M0.3 10 H3 M13.7 10 H11 M0.8 14.8 L3.4 12.5 M13 14.5 L10.6 12.5"/></g><rect x="12.3" y="8" width="2" height="5" fill="#e8c040"/><rect x="12.3" y="14" width="2" height="2" fill="#e8c040"/></svg>
<div class="a" style="left:1864px;top:1062px;width:1px;height:15px;background:#2a2a2a"></div>
<svg width="16" height="16" style="left:1872px;top:1062px" viewBox="0 0 16 16"><g fill="#cfcfcf"><ellipse cx="7" cy="2.8" rx="6" ry="2.3"/><path d="M1 4.5 Q7 8 13 4.5 V7.5 Q7 11 1 7.5Z"/><path d="M1 9.2 Q7 12.7 13 9.2 V12.5 Q7 16 1 12.5Z"/></g><path d="M2 2 L15 15" stroke="#151515" stroke-width="2.2"/><path d="M2 2 L15 15" stroke="#cfcfcf" stroke-width="1.1"/></svg>
<div class="a" style="left:1891px;top:1062px;width:1px;height:15px;background:#2a2a2a"></div>
<svg width="16" height="16" style="left:1897px;top:1062px" viewBox="0 0 16 16"><circle cx="8" cy="8" r="6.8" fill="none" stroke="#cfcfcf" stroke-width="1.2"/><path d="M4.8 8.2 L7.2 10.5 L11.4 5.8" fill="none" stroke="#cfcfcf" stroke-width="1.3"/></svg>

</body></html>
